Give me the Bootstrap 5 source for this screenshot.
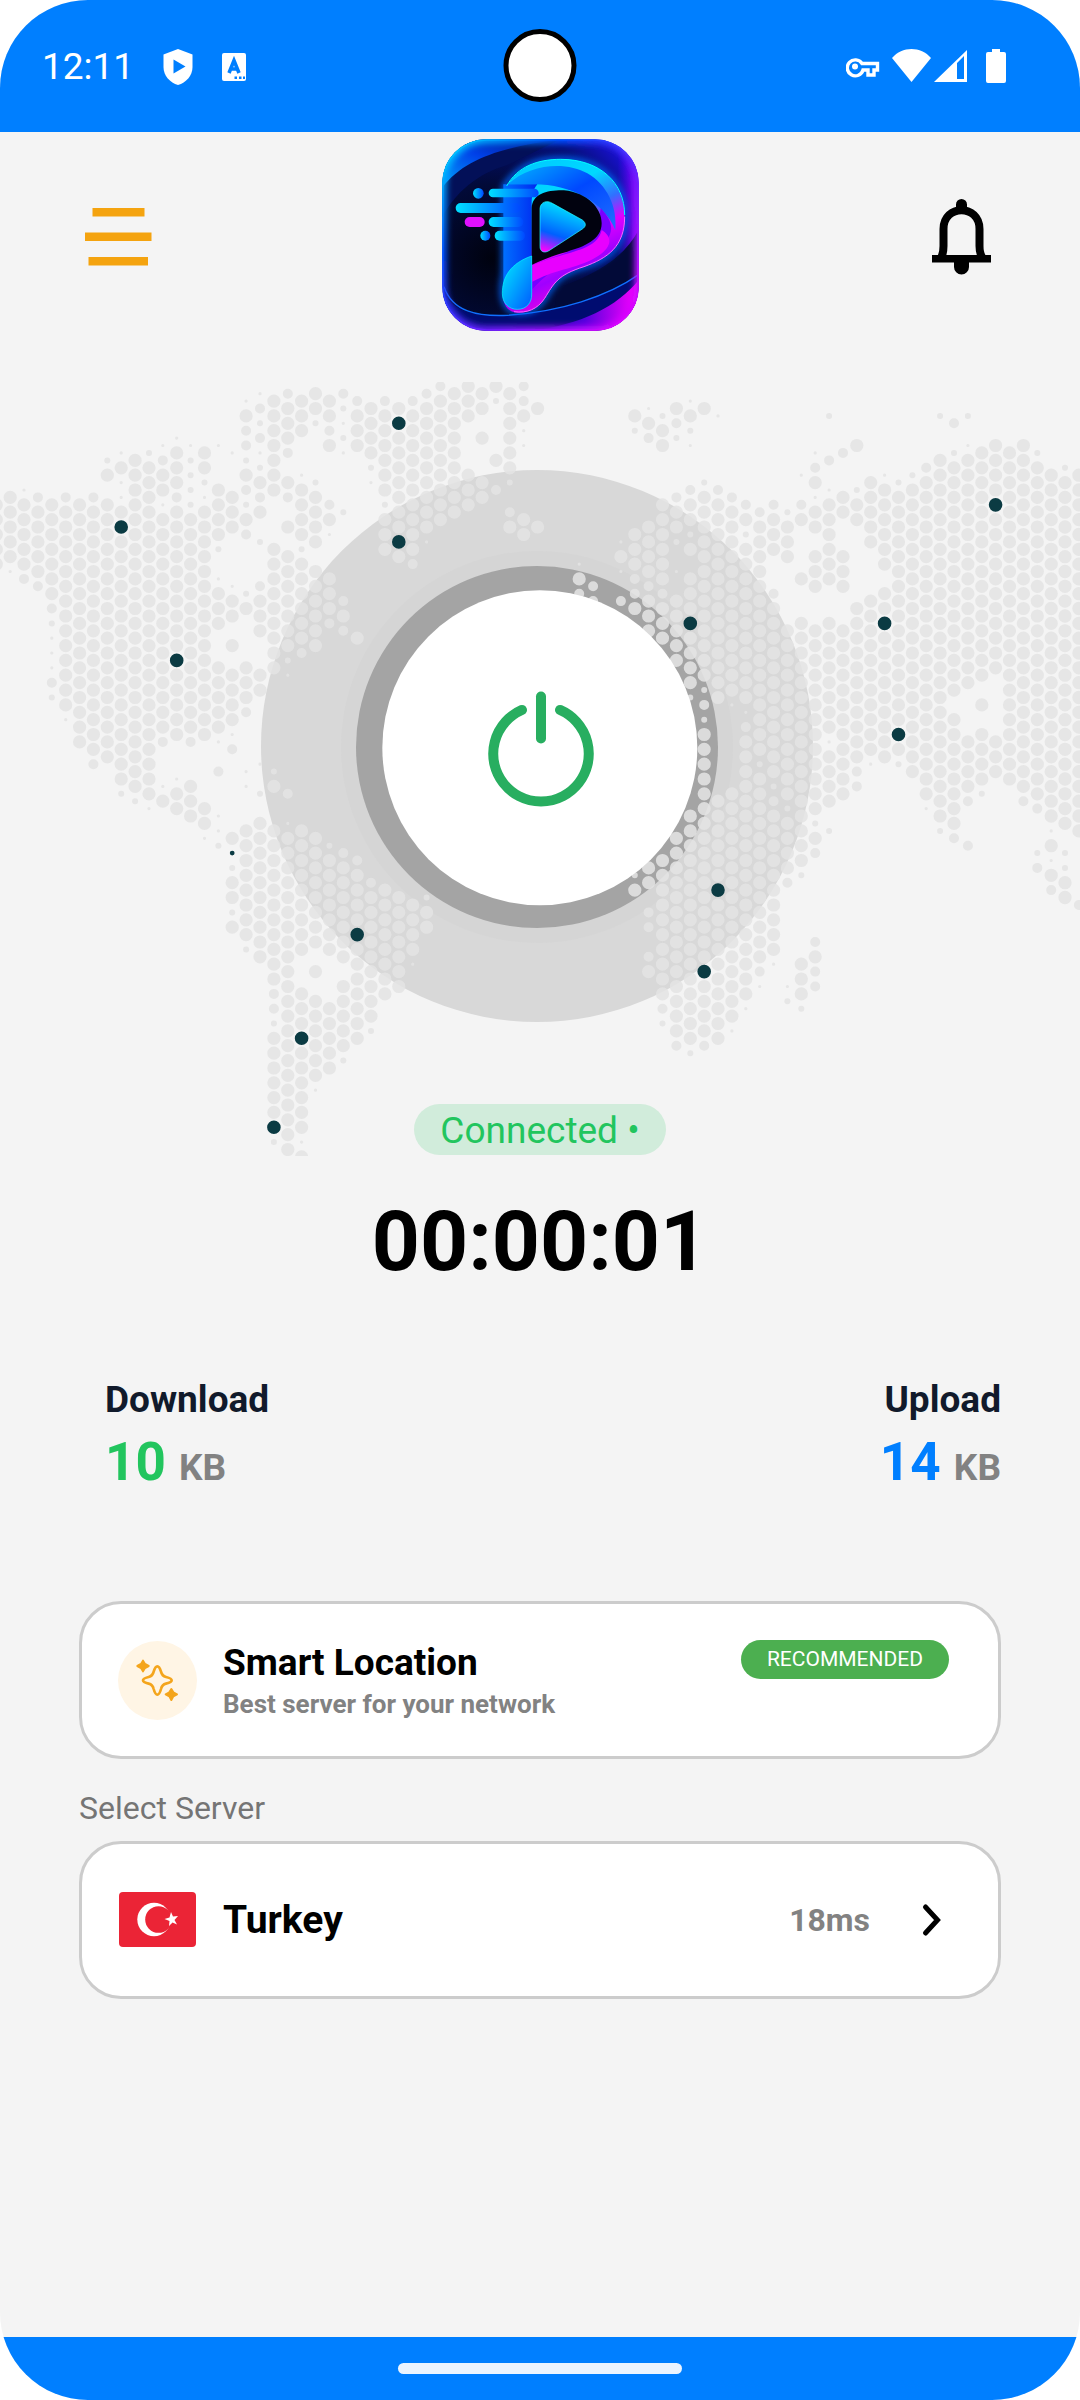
<!DOCTYPE html>
<html lang="en">
<head>
<meta charset="utf-8">
<meta name="viewport" content="width=device-width, initial-scale=1">
<title>VPN</title>
<link href="https://cdn.jsdelivr.net/npm/bootstrap@5.3.0/dist/css/bootstrap.min.css" rel="stylesheet">
<style>
  body { font-family: Roboto, "Liberation Sans", sans-serif; background: #fff; color: #000; }
  svg { display: block; }
  .screen { background: #f4f4f4; border-radius: 88px; overflow: hidden; }
  .status-bar { background: #007fff; height: 132px; padding: 2px 74px 0 42px; color: #fff; }
  .clock { font-size: 37px; line-height: 44px; }
  .camera { width: 73px; height: 73px; top: 29px; background: #fff; border: 5px solid #000; }
  .gutter { padding-left: 79px; padding-right: 79px; }
  .top-bar { height: 206px; margin-bottom: 44px; }
  .icon-btn { width: 80px; height: 80px; }
  .map svg { width: 100%; height: auto; }
  .power { top: 47.3%; left: 50%; width: 29.2%; aspect-ratio: 1; background: #fff; }
  .status-pill { margin-top: -52px; height: 51px; padding: 0 26px; background: #d1ecdb; color: #22c55e; font-size: 37px; line-height: 54px; }
  .timer { margin-top: 37px; font-size: 84px; line-height: 100px; }
  .traffic { margin-top: 86px; padding-left: 105px; padding-right: 79px; }
  .traffic-name { font-size: 37px; line-height: 44px; color: #111a2b; }
  .traffic-value { font-size: 53px; line-height: 62px; margin-top: 9px; }
  .unit { font-size: 37px; color: #828282; }
  .down { color: #22c55e; }
  .up { color: #007fff; }
  .servers { margin-top: 102px; }
  .server-card { background: #fff; border: 3px solid #ccc; border-radius: 42px; padding: 36px 49px 36px 36px; min-height: 158px; gap: 26px; color: #000; }
  .card-name { font-size: 37px; line-height: 46px; }
  .country { font-size: 39px; line-height: 46px; }
  .card-note { font-size: 26px; line-height: 32px; margin-top: 2px; color: #828282; }
  .pick { background: #4caf50; color: #fff; font-size: 21px; line-height: 39px; padding: 0 26px; }
  .section-name { font-size: 32px; line-height: 40px; margin: 29px 0 13px; color: #757575; }
  .ping { font-size: 32px; line-height: 38px; color: #828282; margin-right: 19px; }
  .nav-bar { background: #007fff; height: 63px; }
  .home-pill { width: 284px; height: 11px; background: #ebf4ff; }
</style>
</head>
<body>
<div class="screen d-flex flex-column min-vh-100">
  <div class="status-bar position-relative d-flex align-items-center justify-content-between">
    <div class="d-flex align-items-center">
      <span class="clock">12:11</span>
      <svg class="ms-4" width="40" height="40" viewBox="0 0 40 40" aria-hidden="true">
        <path fill="#fff" d="M20 2 34.500 7.500V20C34.500 29 28 35.500 20 38 12 35.500 5.500 29 5.500 20V7.500Z"/>
        <path fill="#007fff" d="M15.500 12.500 27.500 19.500 15.500 26.500Z"/>
      </svg>
      <svg class="ms-3" width="40" height="40" viewBox="0 0 40 40" aria-hidden="true">
        <rect x="8" y="6" width="24" height="28" rx="2" fill="#fff"/>
        <path fill="none" stroke="#007fff" stroke-width="3.600" d="M15 26 20 13.500 25 26M17 22H23"/>
        <path fill="#007fff" d="M20.500 29.500h2.500v2.500h-2.500zM25 29.500h2.500v2.500H25zM29 29.500h2v2.500h-2z"/>
      </svg>
    </div>
    <div class="camera rounded-circle position-absolute start-50 translate-middle-x"></div>
    <svg width="160" height="40" viewBox="846 47 160 40" aria-hidden="true">
      <path fill="none" stroke="#fff" stroke-width="3.400" d="M862 63.500H877.500V70H874V75H868V70H863A8 8 0 1 1 862 63.500Z"/>
      <circle cx="855" cy="66.500" r="3" fill="#fff"/>
      <path fill="#fff" d="M892 58C902 46 921 46 931 58L911.500 82Z"/>
      <path fill="#fff" fill-rule="evenodd" d="M934 82 967 50V82ZM957 63V79H964V56Z"/>
      <path fill="#fff" d="M992 49H1000V52H1004Q1006 52 1006 54V81Q1006 83 1004 83H988Q986 83 986 81V54Q986 52 988 52H992Z"/>
    </svg>
  </div>

  <header class="top-bar gutter d-flex align-items-center justify-content-between">
    <button type="button" class="icon-btn btn p-0 border-0" aria-label="Menu">
      <svg width="80" height="80" viewBox="79 195 80 80"><path fill="#f4a30f" d="M92.500 208H144.500V216.500H92.500ZM85 232.500H151.500V241H85ZM88.500 257H148V265.500H88.500Z"/></svg>
    </button>
    <svg width="197" height="192" viewBox="64 27 591 576" role="img" aria-label="App logo">
      <defs>
        <linearGradient id="edge" x1="0" y1="0" x2="1" y2="1"><stop offset="0" stop-color="#0df"/><stop offset=".3" stop-color="#0050ff"/><stop offset=".6" stop-color="#6a20ff"/><stop offset="1" stop-color="#e0f"/></linearGradient>
        <radialGradient id="back" cx=".25" cy=".62" r=".85"><stop offset="0" stop-color="#00020f"/><stop offset=".45" stop-color="#020a38"/><stop offset=".8" stop-color="#04107a"/><stop offset="1" stop-color="#1a10d0"/></radialGradient>
        <linearGradient id="corner" x1="0" y1="1" x2="1" y2="0"><stop offset="0" stop-color="#0af"/><stop offset=".5" stop-color="#0040e8"/><stop offset="1" stop-color="#001070"/></linearGradient>
        <linearGradient id="bowl" x1=".1" y1="0" x2=".5" y2="1"><stop offset="0" stop-color="#00c8ff"/><stop offset=".3" stop-color="#00d8ff"/><stop offset=".48" stop-color="#3070ff"/><stop offset=".62" stop-color="#e000ff"/><stop offset=".78" stop-color="#a000ff"/><stop offset="1" stop-color="#ff00e0"/></linearGradient>
        <linearGradient id="inner" x1="0" y1="0" x2="1" y2="1"><stop offset="0" stop-color="#00b4ff"/><stop offset=".5" stop-color="#0048ff"/><stop offset="1" stop-color="#2070ff"/></linearGradient>
        <linearGradient id="stem" x1="0" y1="0" x2="1" y2="0"><stop offset="0" stop-color="#0070ff"/><stop offset="1" stop-color="#0028f0"/></linearGradient>
        <linearGradient id="drop" x1="0" y1="0" x2="1" y2="1"><stop offset="0" stop-color="#00f0ff"/><stop offset="1" stop-color="#0058ff"/></linearGradient>
        <linearGradient id="play" x1=".5" y1="0" x2=".2" y2="1"><stop offset="0" stop-color="#00eaff"/><stop offset=".65" stop-color="#0060ff"/><stop offset="1" stop-color="#f0f"/></linearGradient>
        <linearGradient id="dash" x1="0" y1="0" x2="1" y2="0"><stop offset="0" stop-color="#00e0ff"/><stop offset="1" stop-color="#0048ff"/></linearGradient>
        <linearGradient id="pink" x1="0" y1="0" x2="1" y2="0"><stop offset="0" stop-color="#40f" stop-opacity="0"/><stop offset=".5" stop-color="#50d"/><stop offset="1" stop-color="#f0f"/></linearGradient>
        <linearGradient id="side" x1="0" y1="0" x2="1" y2="0"><stop offset="0" stop-color="#50f" stop-opacity="0"/><stop offset="1" stop-color="#a0f"/></linearGradient>
        <clipPath id="tile"><rect x="65" y="28" width="589" height="574" rx="132"/></clipPath>
        <filter id="glow" x="-20%" y="-20%" width="140%" height="140%"><feGaussianBlur stdDeviation="9"/></filter>
      </defs>
      <g clip-path="url(#tile)">
        <rect x="65" y="28" width="589" height="574" fill="url(#back)"/>
        <path fill="#031058" d="M60 270C100 190 170 130 260 105L420 28H60Z"/>
        <path fill="url(#corner)" d="M60 180C130 80 260 50 420 28H60Z"/>
        <rect x="590" y="28" width="64" height="574" fill="url(#side)"/>
        <path fill="#020a38" d="M654 300C600 400 500 440 410 475L400 545C520 530 600 480 654 430Z"/>
        <path fill="#000c70" d="M60 470C90 550 170 560 260 556C420 545 560 500 660 430V610H60Z"/>
        <path fill="url(#pink)" d="M330 602C480 585 590 530 654 450V602Z"/>
        <path fill="none" stroke="#1070ff" stroke-width="4" d="M70 470C95 545 170 560 260 556C420 545 560 500 654 434"/>
        <rect x="65" y="28" width="589" height="574" rx="132" fill="none" stroke="url(#edge)" stroke-width="26" filter="url(#glow)"/>
      </g>
      <rect x="67" y="30" width="585" height="570" rx="130" fill="none" stroke="url(#edge)" stroke-width="5"/>
      <path fill="none" stroke="#06f" stroke-width="14" filter="url(#glow)" d="M250 170C290 110 350 86 420 88C540 88 614 160 612 260C612 350 560 390 490 410C410 435 400 460 372 505C345 545 310 550 280 545C240 530 240 480 250 430Z"/>
      <path fill="url(#bowl)" d="M255 175C290 110 350 88 420 88C540 88 612 160 612 260C612 350 560 385 490 410C410 435 400 460 372 505C350 538 320 550 290 548C265 545 255 535 248 510L333 400Z"/>
      <path fill="url(#inner)" d="M262 163C330 98 440 95 500 130C560 165 590 230 584 300C550 215 450 163 340 163Z"/>
      <path fill="#7a00ff" d="M335 405C420 370 530 360 540 235C585 280 590 330 500 370C420 400 380 430 335 478Z"/>
      <path fill="#e800ff" d="M335 405C430 365 530 365 543 300C590 330 560 370 500 395C440 420 400 420 335 455Z"/>
      <path fill="url(#stem)" d="M248 163H350C332 185 333 205 333 240V490H248Z"/>
      <path fill="#01020f" d="M333 405V235C335 190 380 180 430 181C500 188 543 235 543 280C543 330 490 350 440 365C400 375 365 390 333 405Z"/>
      <path fill="url(#drop)" stroke="#0ff" stroke-width="2" d="M333 378C270 400 245 440 245 490C245 520 265 538 290 538C320 538 333 515 333 495Z"/>
      <path fill="none" stroke="#0ff" stroke-width="3" d="M258 168C290 110 350 88 420 88C540 88 612 160 612 255"/>
      <path fill="none" stroke="#f6f" stroke-width="3" d="M612 260C612 350 560 385 490 410C410 435 400 460 372 505C350 538 320 550 280 545"/>
      <path fill="url(#play)" stroke="#2ff" stroke-width="2" d="M358 235C360 215 380 210 395 220L485 270C498 280 496 290 485 297L385 362C368 372 358 362 358 350Z"/>
      <g fill="url(#dash)">
        <circle cx="173" cy="190" r="16"/><rect x="204" y="176" width="150" height="26" rx="13"/>
        <rect x="105" y="219" width="194" height="30" rx="15"/><rect x="204" y="261" width="104" height="30" rx="15"/>
        <circle cx="194" cy="317" r="15"/><rect x="222" y="302" width="91" height="30" rx="15"/>
      </g>
      <rect x="132" y="261" width="60" height="30" rx="15" fill="#e010ff"/>
    </svg>
    <button type="button" class="icon-btn btn p-0 border-0" aria-label="Notifications">
      <svg width="80" height="80" viewBox="921 195 80 80">
        <path fill="none" stroke="#000" stroke-width="8" d="M941.500 257Q943.500 253 943.500 246V229C943.500 204 979.500 204 979.500 229V246Q979.500 253 982 257"/>
        <path d="M932 255H991V262.500H932ZM956 210V204.500A5.500 5.500 0 0 1 967 204.500V210ZM954 262H969V267A7.500 7.500 0 0 1 954 267Z"/>
      </svg>
    </button>
  </header>

  <main class="d-flex flex-column">
    <div class="map position-relative">
      <svg viewBox="0 382 1080 774" aria-hidden="true">
        <circle cx="537" cy="746" r="276" fill="#d8d8d8"/>
        <circle cx="537" cy="747" r="196" fill="#d5d5d5"/>
        <circle cx="537" cy="747" r="181" fill="#a4a4a4"/>
        <path id="land" fill="#e4e4e4" fill-opacity=".87"/>
        <path id="pins" fill="#0b3b43"/>
      </svg>
      <button type="button" class="power btn position-absolute translate-middle rounded-circle border-0 p-0" aria-label="Disconnect">
        <svg viewBox="382 590 315 315" fill="none" stroke="#28ae60" stroke-width="10" stroke-linecap="round">
          <path d="M521.500 709.500A47.700 47.700 0 1 0 559.500 709.500"/><path d="M540.500 696V738"/>
        </svg>
      </button>
    </div>
    <div class="status-pill rounded-pill position-relative align-self-center">Connected •</div>
    <div class="timer fw-bold text-center">00:00:01</div>
    <div class="traffic d-flex justify-content-between">
      <div>
        <div class="traffic-name fw-bold">Download</div>
        <div class="traffic-value fw-bold down">10 <span class="unit">KB</span></div>
      </div>
      <div class="text-end">
        <div class="traffic-name fw-bold">Upload</div>
        <div class="traffic-value fw-bold up">14 <span class="unit">KB</span></div>
      </div>
    </div>

    <section class="servers gutter">
      <button type="button" class="server-card d-flex align-items-center w-100 text-start">
        <svg class="flex-shrink-0" width="79" height="79" viewBox="174 180 237 237" aria-hidden="true">
          <circle cx="292.500" cy="298.500" r="118.500" fill="#fff5e5"/>
          <path fill="none" stroke="#f4a51c" stroke-width="8" stroke-linejoin="round" d="M292 256C298 256 300 262 303 272Q306 285 318 288C330 291 335 293 335 298C335 303 330 305 318 308Q306 311 303 324C300 335 298 341 292 341C286 341 284 335 281 324Q278 311 266 308C254 305 249 303 249 298C249 293 254 291 266 288Q278 285 281 272C284 262 286 256 292 256Z"/>
          <g fill="#f4a51c" stroke="#f4a51c" stroke-width="6" stroke-linejoin="round"><path d="M249 239 255 249 266 255 255 261 249 271 243 261 232 255 243 249Z"/><path d="M334 324 340 334 351 340 340 346 334 357 328 346 317 340 328 334Z"/></g>
        </svg>
        <span class="flex-grow-1">
          <span class="card-name fw-bold d-block">Smart Location</span>
          <span class="card-note fw-bold d-block">Best server for your network</span>
        </span>
        <span class="pick rounded-pill align-self-start">RECOMMENDED</span>
      </button>
      <div class="section-name" id="pick-server">Select Server</div>
      <button type="button" class="server-card d-flex align-items-center w-100 text-start" aria-describedby="pick-server">
        <svg class="flex-shrink-0" width="79" height="56" viewBox="0 0 79 56" role="img" aria-label="Flag of Turkey">
          <rect x="1" width="77" height="55" rx="4" fill="#eb2436"/>
          <circle cx="36" cy="27.500" r="16.700" fill="#fff"/><circle cx="40.500" cy="27.500" r="13.300" fill="#eb2436"/>
          <path fill="#fff" d="M53 20 55 24.500 60 24 56.500 28 59 32.500 54.500 30.500 51 34 51.500 29 46.500 27 51.500 25.500Z"/>
        </svg>
        <span class="country fw-bold flex-grow-1">Turkey</span>
        <span class="ping fw-bold">18ms</span>
        <svg width="34" height="34" viewBox="0 0 34 34" fill="none" stroke="#000" stroke-width="5" stroke-linecap="round" stroke-linejoin="miter" aria-hidden="true"><path d="M10.500 4 22.500 17 10.500 30"/></svg>
      </button>
    </section>
  </main>

  <footer class="nav-bar mt-auto d-flex align-items-center justify-content-center">
    <div class="home-pill rounded-pill"></div>
  </footer>
</div>
<script src="https://cdn.jsdelivr.net/npm/bootstrap@5.3.0/dist/js/bootstrap.bundle.min.js"></script>
<script>
// World map: one string per column of the dot grid. "a-b" is a run of full dots, a lone
// number one dot; suffix m, s or t makes it smaller. Past "|" the scale starts again at 1260.
const columns = [
 "436-613","413-591 635t","390t 436-613 657m","413m 458-635 680m","436-702 746m 790s 834t 880t 924t 968m 1013s",
 "413m 458-1036 1080t","436-1148","413m 458-1170 1212m","301s 346 436-1190","279t 324 368t 413t 458-1257|42s",
 "301-1236|19 64s","279s 324-1257|42 87t","258t 301m 346 390 435t 480-1103 1147m|19t 64","235t 279 324 368 413m 458-1125 1257t|42 87",
 "258t 301s 346s 390s 435s 480-1103 1147m|19 64 109","279 324 368s 413t 458-1125|87 131 175t",
 "258t 390 435 480 524 569s 657t 702-790 924-1103 1147t 1236m|109t 153t 197s",
 "279t 413-502 680t 724 768 858 947-1080 1125t 1170m|175 263s 308 352 397s 441",
 "124t 168 213m 257m 301s 346 390m 435s 480 524m 702s 746 924-1013 1058m 1236t|19t 153-463 508s",
 "101t 147m 190s 235m 279t 324s 368 413m 458 547s 680m 724-813 947-990 1213t|42s 131-530",
 "124-390 569-924 1236s|19 153-597 641m 686m 730s 775-996 1085s","101m 147-235 279m 368 413m 502 591-857 902s 947t|42m 131t 175-1107",
 "124-213 346t 390-524 569s 613-834 880m|153-508 641-1041 1085t 1129","101 147 190s 368s 413-547 635-857|175-486 575 664-885 930t",
 "124 168 213m 258 435m 480 524t 657 702 746 790m|197s 241-508 686-864","101m 147s 190t 235s 279t 458s 724m 768 813m|219m 263-530 619-797 841s",
 "124m 168 213 257 834|241m 285-775","147-279 324s 368t|308m 352-708 752s","124m 168-390 435s 480-569|330-641",
 "147-591|352-619","124m 168-569 613m|375-508 553t","101m 147-502 547t|352s 397 441","79m 124-480","101-457","79-168 346-435",
 "101-147 235 368-413","79 124s 302 390m","101-324 368s 458m 502","79m 124m 168 213t 258t 480 524","147 502","","",
 "613t 657 702m","680m 724m","","547t 591 635t 724m","168 213s 524-613 657m 702m 746|286s 330","147t 190 235m 502-636 680m 724-813|263-308 397m 441m 530m 575",
 "168s 213-258 435-657 702m 746-834|241-641 686m 730s","147 190m 235s 413m 458 502 547s 635t 724-902|175-752 797m",
 "124t 168 213s 257t 390m 435 480 524s 569 657-968 1013s|109-775 819s","147 368s 413-947 990s 1036m 1080s 1125-1257|42-752 797m",
 "168t 390m 435-1013|64-775","413m 458-990 1036t|42-708 752t","435m 480 524s 569-1013 1058t 1103m 1147-1236|19-641 686t",
 "458m 502-1170 1213s 1257|42-530 575m 619t","435m 480-569 702m 746-1236|19s 64m 109-508 552t","458s 502-591 813-1257|42 87s 131-263 308m 619t 664s",
 "346t 435m 480 657 790-1236|19-241 286s 552-641 686s","279t 324m 368 413t 458-502 591-680 813-1080 1125-1257|42-87 131s 175 219m 486m 530 575m 619m",
 "168s 301m 390t 435-657 790-1103 1147t 1191-1236|19-64 153s","279m 413-458 591-680 813-1257|42","258 390s 435-480 746-1191 1236m|19m",
 "368 413-547 724-1170 1213t","346t 390-613 702-1191","368s 413-1170 1213s","346s 390-1236","324m 368-1257|42 87t",
 "168s 301-1236|19 64 109 153s","190m 279s 324-990 1080-1257|42-131 175m","168s 258t 301-968 1147-1236|19 64m 197m",
 "279-947 1036 1125-1257|42s","257-924 1147-1236","279-1257|19s","257-1236|19 64m","279s 324-1257|42 87m 219s 263m",
 "346-1236|19-109 153t 197 241t 286 330m","324s 368-1257|42-131 219s 263s 308 352","346-1236|19-153 375m"
];
const radius = { "": 6.6, m: 5, s: 3, t: 1.6 };
const dot = (x, y, r) => `M${(x - r).toFixed(1)} ${y.toFixed(1)}a${r} ${r} 0 1 0 ${2 * r} 0a${r} ${r} 0 1 0 ${-2 * r} 0Z`;
const colX = k => 10.16 + 13.88 * k;
const rowOf = (v, k) => { const p = Math.abs(k % 2); return 2 * Math.round(((v - 190) / 22.225 - p) / 2) + p; };
const rowY = h => 423.3 + 7.41 * h;
let land = "";
columns.forEach((text, i) => {
  const k = i - 1;
  text.split("|").forEach((part, half) => {
    (part.match(/\S+/g) || []).forEach(token => {
      const [, a, b, size] = token.match(/^(\d+)(?:-(\d+))?([mst]?)$/);
      const first = rowOf(+a + 1260 * half, k), last = rowOf(+(b || a) + 1260 * half, k);
      for (let h = first; h <= last; h += 2) land += dot(colX(k), rowY(h), radius[size]);
    });
  });
});
document.getElementById("land").setAttribute("d", land);
const pins = [[28,190],[28,547],[8,502],[12,902],[49,790],[71,435],[63,790],[64,1124],[25,1724],[21,2035],[19,2301],[51,1590],[50,1835]];
document.getElementById("pins").setAttribute("d",
  pins.map(([k, v]) => dot(colX(k), rowY(rowOf(v, k)), 6.8)).join("") + dot(colX(16), rowY(rowOf(1479, 16)), 2.4));
</script>
</body>
</html>
